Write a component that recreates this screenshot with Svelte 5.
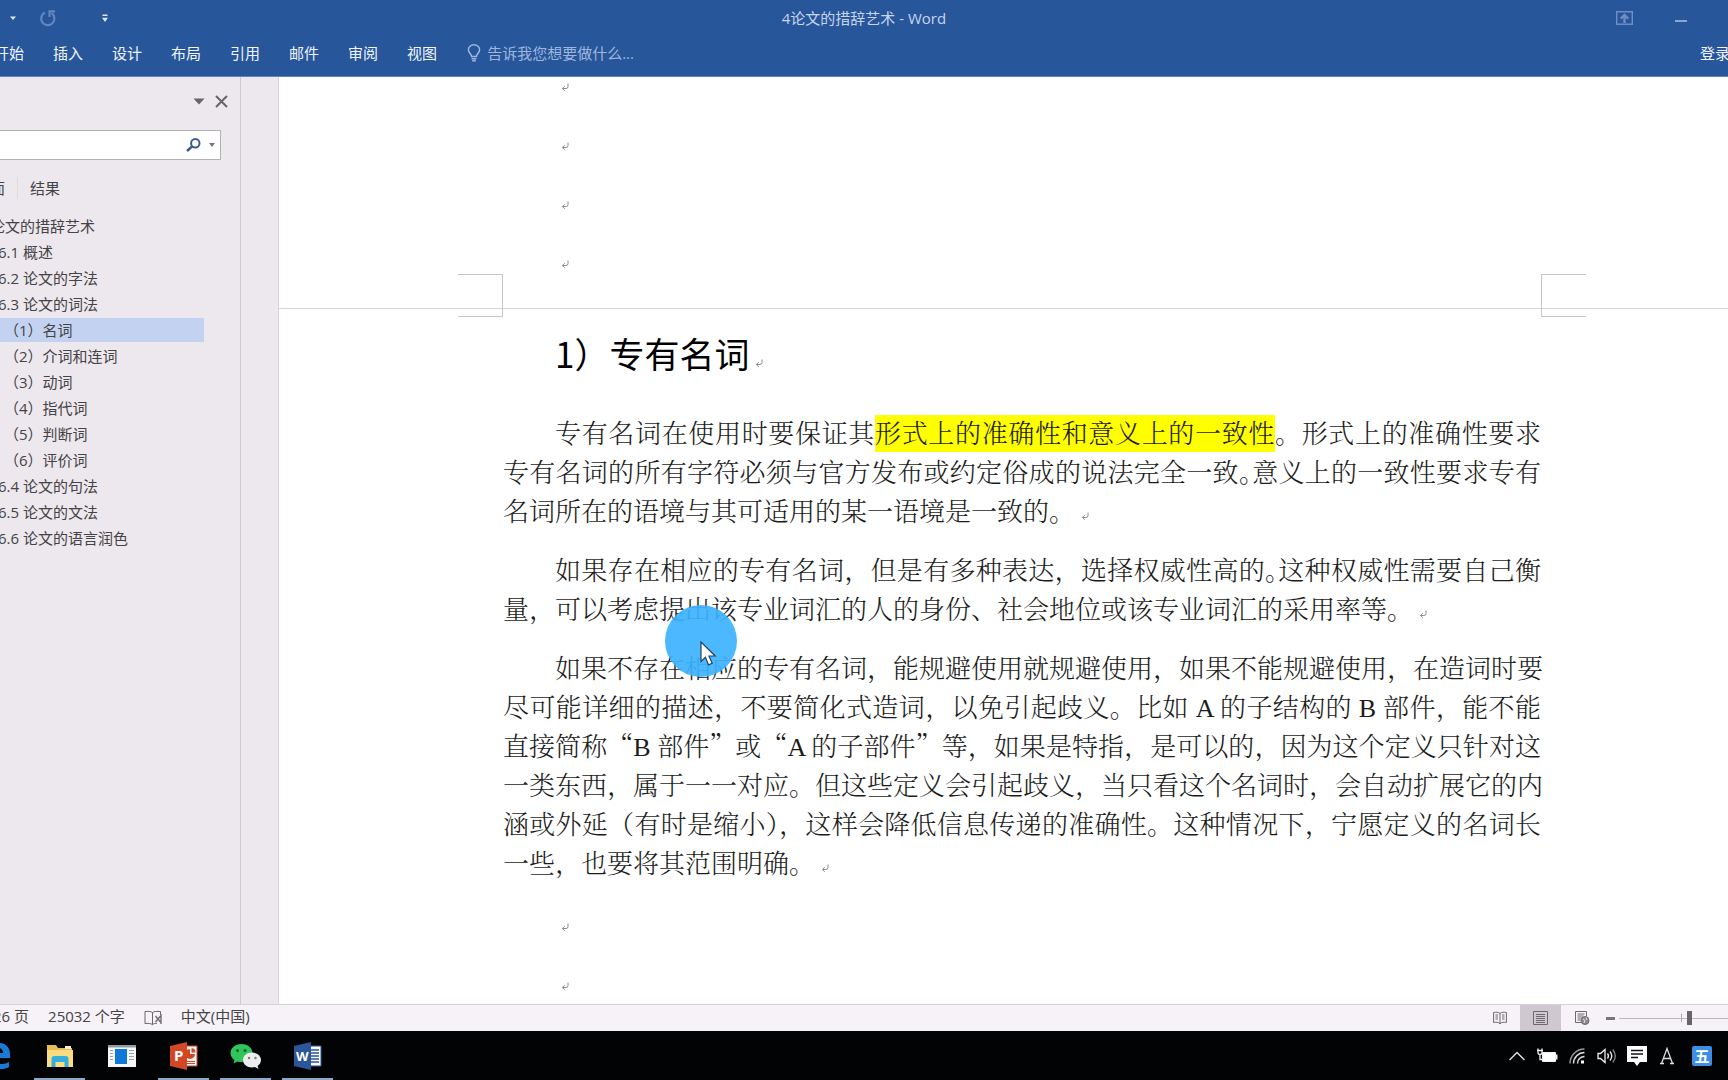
<script>
  const tabs = ['开始', '插入', '设计', '布局', '引用', '邮件', '审阅', '视图']

  const outline = [
    { level: 1, text: '论文的措辞艺术' },
    { level: 2, text: '6.1 概述' },
    { level: 2, text: '6.2 论文的字法' },
    { level: 2, text: '6.3 论文的词法' },
    { level: 3, text: '（1）名词' },
    { level: 3, text: '（2）介词和连词' },
    { level: 3, text: '（3）动词' },
    { level: 3, text: '（4）指代词' },
    { level: 3, text: '（5）判断词' },
    { level: 3, text: '（6）评价词' },
    { level: 2, text: '6.4 论文的句法' },
    { level: 2, text: '6.5 论文的文法' },
    { level: 2, text: '6.6 论文的语言润色' }
  ]

  let selected = $state(4)
  let zoom = $state(57)
  let keyword = $state('')
</script>

{#snippet mark()}
  <svg class="mark" width="8" height="9" viewBox="0 0 8 9" fill="none" stroke="#8c8c8c">
    <path d="M7 0.5V3.5Q7 5.5 5 5.5H1.5M3.8 3.2L1.3 5.5L3.8 7.8" />
  </svg>
{/snippet}

<div class="window">
  <header>
    <div class="title-bar">
      <div class="quick">
        <button class="quick-btn" title="撤消">
          <svg width="8" height="5" viewBox="0 0 8 5"><path d="M1 0.5h6L4 4z" fill="#dfe8f5" /></svg>
        </button>
        <button class="quick-btn redo" title="重复">
          <svg width="18" height="18" viewBox="0 0 18 18" fill="none" stroke="#6485bd" stroke-width="2.2">
            <path d="M6 3.6A6.6 6.6 0 1 0 12.6 4.2M10.5 8V2.4H16" />
          </svg>
        </button>
        <button class="quick-btn" title="自定义快速访问工具栏">
          <svg width="8" height="9" viewBox="0 0 8 9" fill="#dfe8f5"><path d="M1.5 0.5h5v1.4h-5zM1 3.8h6L4 8z" /></svg>
        </button>
      </div>
      <h1>4论文的措辞艺术 - Word</h1>
      <div class="win-btns">
        <button title="功能区显示选项">
          <svg width="17" height="14" viewBox="0 0 17 14" fill="none" stroke="#6f8dc2">
            <path d="M0.7 0.7h15.6v12.6H0.7z" stroke-width="1.4" />
            <path d="M8.5 12V4.5M4.8 7.6L8.5 4l3.7 3.6" stroke-width="2.4" />
          </svg>
        </button>
        <button title="最小化">
          <svg width="12" height="14" viewBox="0 0 12 14"><path d="M0 9h12v2H0z" fill="#8ca6d2" /></svg>
        </button>
      </div>
    </div>
    <div class="ribbon">
      <nav class="tabs">
        {#each tabs as tab}
          <button>{tab}</button>
        {/each}
      </nav>
      <button class="tell-me">
        <svg width="14" height="18" viewBox="0 0 14 18" fill="none" stroke="#9fb6dc" stroke-width="1.5">
          <path d="M4.6 12.5C4.6 9.8 1.4 9 1.4 5.8a5.6 5 0 0 1 11.2 0c0 3.2-3.2 4-3.2 6.7zM4.6 14.7h4.8M5.2 16.8h3.6" />
        </svg>
        告诉我您想要做什么...
      </button>
      <button class="login">登录</button>
    </div>
  </header>

  <div class="workspace">
    <aside>
      <div class="pane-head">
        <button title="任务窗格选项">
          <svg width="12" height="7" viewBox="0 0 12 7"><path d="M0.5 0.5h11L6 6.5z" fill="#666" /></svg>
        </button>
        <button title="关闭">
          <svg width="13" height="13" viewBox="0 0 13 13" stroke="#666" stroke-width="2"><path d="M1 1l11 11M12 1L1 12" /></svg>
        </button>
      </div>
      <div class="search">
        <input type="text" aria-label="搜索文档" bind:value={keyword} />
        <button title="搜索">
          <svg width="15" height="14" viewBox="0 0 15 14" fill="none" stroke="#3c5a92">
            <circle cx="9.3" cy="5.3" r="4.2" stroke-width="2" />
            <path d="M6.2 8.4L1 13" stroke-width="2.6" />
          </svg>
        </button>
        <button title="更多">
          <svg width="6" height="4" viewBox="0 0 6 4"><path d="M0 0h6L3 4z" fill="#777" /></svg>
        </button>
      </div>
      <div class="pane-tabs">
        <button>页面</button>
        <button>结果</button>
      </div>
      <ul>
        {#each outline as item, i}
          <li>
            <button class="node level-{item.level}" class:selected={selected === i} onclick={() => (selected = i)}>
              {item.text}
            </button>
          </li>
        {/each}
      </ul>
    </aside>
    <div class="gutter"></div>

    <main>
      <section class="page-end">
        <p class="blank">{@render mark()}</p>
        <p class="blank">{@render mark()}</p>
        <p class="blank">{@render mark()}</p>
        <p class="blank">{@render mark()}</p>
        <i class="corner left"></i>
        <i class="corner right"></i>
      </section>

      <section class="page">
        <h2>1）专有名词{@render mark()}</h2>

        <p>
          <span class="line first">专有名词在使用时要保证其<mark>形式上的准确性和意义上的一致性</mark>。形式上的准确性要求</span>
          <span class="line">专有名词的所有字符必须与官方发布或约定俗成的说法完全一致<span class="half">。</span>意义上的一致性要求专有</span>
          <span class="line last">名词所在的语境与其可适用的某一语境是一致的。{@render mark()}</span>
        </p>

        <p>
          <span class="line first">如果存在相应的专有名词，但是有多种表达，选择权威性高的<span class="half">。</span>这种权威性需要自己衡</span>
          <span class="line last">量，可以考虑提出该专业词汇的人的身份、社会地位或该专业词汇的采用率等。{@render mark()}</span>
        </p>

        <p>
          <span class="line first">如果不存在相应的专有名词，能规避使用就规避使用，如果不能规避使用，在造词时要</span>
          <span class="line">尽可能详细的描述，不要简化式造词，以免引起歧义。比如 A 的子结构的 B 部件，能不能</span>
          <span class="line">直接简称<span class="wide">“</span>B 部件<span class="wide">”</span>或<span class="wide">“</span>A 的子部件<span class="wide">”</span>等，如果是特指，是可以的，因为这个定义只针对这</span>
          <span class="line">一类东西，属于一一对应。但这些定义会引起歧义，当只看这个名词时，会自动扩展它的内</span>
          <span class="line">涵或外延（有时是缩小<span class="half">）</span>，这样会降低信息传递的准确性。这种情况下，宁愿定义的名词长</span>
          <span class="line last">一些，也要将其范围明确。{@render mark()}</span>
        </p>

        <p class="blank">{@render mark()}</p>
        <p class="blank">{@render mark()}</p>
      </section>

      <div class="pointer">
        <svg width="18" height="26" viewBox="0 0 18 26" fill="#fff" stroke="#26435c" stroke-width="1.2">
          <path d="M1 1v19.5l4.4-4.2 3.2 7.6 3.6-1.6-3.2-7.3h6.2z" />
        </svg>
      </div>
    </main>
  </div>

  <footer class="status">
    <span class="pages">26 页</span>
    <span>25032 个字</span>
    <button title="校对">
      <svg width="18" height="16" viewBox="0 0 18 16" fill="none" stroke="#666">
        <path d="M8.5 2.5C7 1.3 4 1.3 1 1.5v12c3-.2 6-.2 7.5 1.2C9.5 13.5 11 13.4 13 13.4M8.5 2.5v12M8.5 2.5C10 1.3 13 1.3 16.5 1.5v3" />
        <path d="M11.5 6l5 6M16.5 6l-5 6M17 4v10" stroke-width="1.3" />
      </svg>
    </button>
    <span>中文(中国)</span>

    <div class="views">
      <button title="阅读视图">
        <svg width="14" height="14" viewBox="0 0 14 14" fill="none" stroke="#6b6b6b">
          <path d="M7 2.5C5.5 1 3 1 0.6 1.5v10C3 11 5.5 11 7 12.8 8.5 11 11 11 13.4 11.5v-10C11 1 8.5 1 7 2.5zM7 2.5v10.5" />
          <path d="M2.5 4H5M2.5 6H5M2.5 8H5M9 4h2.5M9 6h2.5M9 8h2.5" />
        </svg>
      </button>
      <button class="on" title="页面视图">
        <svg width="15" height="14" viewBox="0 0 15 14" fill="none" stroke="#6b6b6b">
          <path d="M0.5 0.5h14v13H0.5zM3 3.5h9M3 5.5h9M3 7.5h9M3 9.5h9M3 11.5h9" />
        </svg>
      </button>
      <button title="Web 版式视图">
        <svg width="16" height="14" viewBox="0 0 16 14" fill="none" stroke="#6b6b6b">
          <path d="M7 11.5H1.5v-11h11v5M3.5 3h7M3.5 5h6M3.5 7h4M3.5 9h3" />
          <circle cx="11" cy="9.5" r="4" fill="#8a8a8a" />
          <path d="M9 8l2 1.5-1 2.5M12 6.5l1 2.5" stroke="#e8e8e8" />
        </svg>
      </button>
    </div>
    <div class="zoom">
      <button title="缩小">
        <svg width="9" height="3" viewBox="0 0 9 3"><path d="M0 0h9v3H0z" fill="#777" /></svg>
      </button>
      <input type="range" min="0" max="100" aria-label="缩放" bind:value={zoom} />
    </div>
  </footer>

  <div class="taskbar">
    <div class="apps">
      <button title="Edge">
        <svg width="28" height="28" viewBox="0 0 28 28" fill="#1b7ad6">
          <path d="M2 12C4 4 9 1 15 1c7 0 11 5 11 11v4H10c0 4 4 6 8 6 3 0 5-.8 7-2v5c-2 1.5-5 2-8 2C9 27 5 23 5 17c0-4 2-7 5-9-4 .6-6 2-8 4zm8-1h9c0-3-1.5-5-4.5-5S10.4 8 10 11z" />
        </svg>
      </button>
      <button class="running" title="文件资源管理器">
        <svg width="28" height="26" viewBox="0 0 28 26">
          <path d="M1 2h9l2 3h14v19H1z" fill="#e9bd55" />
          <path d="M1 7h26v17H1z" fill="#fbdc83" />
          <path d="M19 3h6v3h-6z" fill="#f7efd2" />
          <path d="M5.5 24v-8q0-3 3-3h11q3 0 3 3v8h-4v-5h-9v5z" fill="#35aede" />
        </svg>
      </button>
      <button title="应用">
        <svg width="28" height="22" viewBox="0 0 28 22">
          <path d="M0 0h28v22H0z" fill="#f4f6f8" />
          <path d="M0 0h28v2.5H0z" fill="#8f9aa5" />
          <path d="M7 4h12v15H7z" fill="#1078d7" />
          <path d="M2 5.5h3M2 8.5h3M2 11.5h3M2 14.5h3M21 5.5h5M21 8.5h5M21 11.5h5M21 14.5h5" stroke="#9aa2aa" />
        </svg>
      </button>
      <button class="running" title="PowerPoint">
        <svg width="28" height="28" viewBox="0 0 28 28">
          <path d="M14 4h13v20H14z" fill="#f8f4f2" stroke="#d24726" />
          <path d="M20 7v5h5a5 5 0 1 1-5-5z" fill="#d24726" />
          <path d="M21.5 6a4.5 4.5 0 0 1 4 4.5h-4z" fill="#d24726" />
          <path d="M17 19.5h8M17 21.5h8" stroke="#d24726" />
          <path d="M0 4L17 0v28L0 24z" fill="#d24726" />
          <text x="4" y="19" font-size="15">P</text>
        </svg>
      </button>
      <button class="running" title="微信">
        <svg width="32" height="28" viewBox="0 0 32 28">
          <path d="M11.5 2C5 2 0.5 6 0.5 11c0 3 1.6 5.4 4 7l-1 3.5 4-2c1.2.4 2.6.5 4 .5 6.5 0 11-4 11-9s-4.5-9-11-9z" fill="#2fc45c" />
          <circle cx="7.5" cy="8.5" r="1.5" fill="#14602c" />
          <circle cx="15" cy="8.5" r="1.5" fill="#14602c" />
          <path d="M22 10.5c-5.2 0-9 3.4-9 7.5s3.8 7.5 9 7.5c1 0 2-.2 3-.5l3.5 2-.9-3c2-1.4 3.4-3.5 3.4-6 0-4.1-3.8-7.5-9-7.5z" fill="#ececec" />
          <circle cx="19" cy="16" r="1.2" fill="#777" />
          <circle cx="25.5" cy="16" r="1.2" fill="#777" />
        </svg>
      </button>
      <button class="running" title="Word">
        <svg width="28" height="28" viewBox="0 0 28 28">
          <path d="M14 4h13v20H14z" fill="#f6f8fb" stroke="#2b579a" />
          <path d="M17 8h8M17 11h8M17 14h8M17 17h8M17 20h8" stroke="#2b579a" stroke-width="1.4" />
          <path d="M0 4L17 0v28L0 24z" fill="#2b579a" />
          <text x="2" y="19" font-size="13">W</text>
        </svg>
      </button>
    </div>

    <div class="tray">
      <button title="显示隐藏的图标">
        <svg width="16" height="10" viewBox="0 0 16 10" fill="none" stroke="#ddd" stroke-width="1.5"><path d="M0.5 9L8 1.5 15.5 9" /></svg>
      </button>
      <button title="电源">
        <svg width="21" height="15" viewBox="0 0 21 15" fill="none" stroke="#eee">
          <path d="M5.5 4.5h13v9h-13z" fill="#fff" />
          <path d="M19.5 6.5v5" stroke-width="2" />
          <path d="M1 0.5v4q0 2 2 2t2-2v-4M0 2.5h6M3 6v5.5h3" stroke-width="1.3" />
        </svg>
      </button>
      <button title="网络">
        <svg width="16" height="16" viewBox="0 0 16 16" fill="none" stroke="#ddd" stroke-width="1.5">
          <path d="M1 15.5C1 7.5 7.5 1 15.5 1" stroke="#999" />
          <path d="M4.5 15.5c0-6 5-11 11-11M8.5 15.5c0-4 3-7 7-7" />
          <path d="M12 12.5h3v3h-3z" fill="#fff" stroke="none" />
        </svg>
      </button>
      <button title="音量">
        <svg width="20" height="16" viewBox="0 0 20 16" fill="none" stroke="#eee" stroke-width="1.3">
          <path d="M1 5.5h2.5L8 1.5v13L3.5 10.5H1zM10.5 5.5q2 2.5 0 5M13 3.5q3.5 4.5 0 9" />
          <path d="M15.8 1.5q5 6.5 0 13" stroke="#888" />
        </svg>
      </button>
      <button title="操作中心">
        <svg width="20" height="20" viewBox="0 0 20 20">
          <path d="M0 0h20v16h-7l-3 4-3-4H0z" fill="#fff" />
          <path d="M4 4.5h12M4 8h12M4 11.5h7" stroke="#111" stroke-width="1.4" />
        </svg>
      </button>
      <button title="输入模式">
        <svg width="14" height="18" viewBox="0 0 14 18" fill="none" stroke="#ddd" stroke-width="1.3">
          <path d="M1.5 16.5L7 1.5l5.5 15M3.5 11.5h7M0 16.5h4M10 16.5h4" />
        </svg>
      </button>
      <button class="ime" title="五笔输入法">五</button>
    </div>
  </div>
</div>

<style>
  :global(body) {
    margin: 0;
  }

  .window {
    display: grid;
    grid-template-columns: minmax(0, 1fr);
    grid-template-rows: auto 1fr auto auto;
    height: 100vh;
    overflow: hidden;
    background: #fff;
    font-family: 'Open Sans', 'Noto Sans CJK SC', sans-serif;
    font-size: 15px;
    line-height: 20px;
    color: #444;
  }

  button {
    display: flex;
    align-items: center;
    justify-content: center;
    flex: none;
    padding: 0;
    border: none;
    background: none;
    color: inherit;
    font: inherit;
    white-space: nowrap;
    cursor: pointer;
  }

  p,
  h1,
  h2,
  ul {
    margin: 0;
    padding: 0;
  }

  header {
    background: #28569b;
    border-bottom: 1px solid #5f84bd;
    color: #f0f5fc;
  }

  .title-bar {
    display: grid;
    grid-template-columns: 1fr auto 1fr;
    align-items: center;
    height: 36px;
  }

  .quick {
    display: flex;
    align-items: center;
    padding-left: 9px;
  }

  .redo {
    margin: 0 44px 0 22px;
  }

  h1 {
    font-size: 15px;
    font-weight: 400;
    color: #c6d5ec;
  }

  .win-btns {
    display: flex;
    justify-content: flex-end;
    gap: 42px;
    padding-right: 41px;
  }

  .ribbon {
    display: flex;
    align-items: center;
    height: 34px;
    padding-bottom: 6px;
  }

  .tabs {
    display: flex;
    gap: 29px;
    margin-left: -6px;
  }

  .tell-me {
    gap: 6px;
    margin-left: 30px;
    color: #9fb6dc;
  }

  .login {
    margin: 0 -2px 0 auto;
  }

  .workspace {
    display: flex;
    min-height: 0;
    background: #ede7ee;
  }

  aside {
    flex: none;
    width: 240px;
    overflow: hidden;
    border-right: 1px solid #cfcad1;
  }

  .pane-head {
    display: flex;
    justify-content: flex-end;
    gap: 10px;
    height: 48px;
    padding: 0 12px 5px 0;
  }

  .search {
    display: flex;
    gap: 8px;
    height: 28px;
    margin-right: 19px;
    padding-right: 5px;
    border: 1px solid #b5b2b6;
    border-left: none;
    background: #fff;
  }

  .search input {
    flex: 1;
    min-width: 0;
    padding: 0 8px;
    border: none;
    outline: none;
    font: inherit;
  }

  .pane-tabs {
    display: flex;
    align-items: center;
    height: 22px;
    margin: 17px 0 15px -25px;
  }

  .pane-tabs button + button {
    height: 22px;
    margin-left: 12px;
    padding-left: 12px;
    border-left: 1px solid #dfd9e0;
  }

  ul {
    list-style: none;
  }

  .node {
    justify-content: flex-start;
    width: 204px;
    height: 24px;
    margin-bottom: 2px;
  }

  .level-1 {
    text-indent: -10px;
  }

  .level-2 {
    text-indent: -2px;
  }

  .level-3 {
    text-indent: 4px;
  }

  .selected {
    background: #c4d2f2;
  }

  .gutter {
    flex: none;
    width: 37px;
    border-right: 1px solid #d9d4db;
  }

  main {
    position: relative;
    flex: 1;
    min-width: 0;
    overflow: hidden;
    background: #fff;
    color: #1c1c1c;
    font-family: 'Liberation Serif', SimSun, 'Noto Serif CJK SC', 'Noto Sans CJK SC', serif;
    font-size: 26px;
    font-weight: 300;
    line-height: 39px;
  }

  .page-end,
  .page {
    padding: 0 187px 0 224px;
  }

  .page-end {
    position: relative;
    display: flex;
    flex-direction: column;
    justify-content: flex-end;
    gap: 20px;
    height: 203px;
    padding-bottom: 28px;
    border-bottom: 1px solid #d4d4d4;
  }

  .blank {
    flex: none;
    height: 39px;
    padding-left: 52px;
  }

  .mark {
    margin-left: 6px;
  }

  .corner {
    position: absolute;
    bottom: -9px;
    width: 44px;
    height: 41px;
    border: 1px solid #c6c6c6;
  }

  .corner.left {
    left: 179px;
    border-left: none;
  }

  .corner.right {
    right: 142px;
    border-right: none;
  }

  .page {
    padding-top: 14px;
  }

  h2 {
    margin-bottom: 32px;
    padding-left: 52px;
    font-family: 'Noto Sans CJK SC', sans-serif;
    font-size: 35px;
    font-weight: 400;
    line-height: 60px;
    color: #000;
  }

  .page p {
    margin-bottom: 20px;
  }

  .line {
    display: block;
    text-align: justify;
    text-align-last: justify;
    white-space: nowrap;
  }

  .line.first {
    padding-left: 52px;
  }

  .line.last {
    text-align-last: left;
  }

  .half {
    font-feature-settings: 'halt';
  }

  /* full-width quotation marks */
  .wide {
    font-family: SimSun, 'Noto Serif CJK SC', 'Noto Sans CJK SC', serif;
    line-height: 1;
  }

  mark {
    padding: 5px 0 3px;
    background: #ff0;
    color: inherit;
  }

  .pointer {
    position: absolute;
    top: 528px;
    left: 386px;
    width: 72px;
    height: 72px;
    border-radius: 50%;
    background: rgba(60, 178, 255, 0.92);
  }

  .pointer svg {
    position: absolute;
    top: 36px;
    left: 35px;
  }

  .status {
    display: flex;
    align-items: center;
    gap: 19px;
    height: 26px;
    overflow: hidden;
    border-top: 1px solid #d8d2d9;
    background: #f6f2f7;
  }

  .status span {
    padding-bottom: 4px;
  }

  .pages {
    margin-left: -7px;
  }

  .views {
    display: flex;
    align-self: stretch;
    margin-left: auto;
  }

  .views button {
    width: 41px;
  }

  .views .on {
    background: #cfc8d1;
  }

  .zoom {
    display: flex;
    align-items: center;
    gap: 4px;
    margin: 0 -15px;
  }

  .zoom input {
    appearance: none;
    width: 124px;
    height: 14px;
    margin: 0;
    background:
      linear-gradient(#aaa, #aaa) center / 1px 8px no-repeat,
      linear-gradient(#bbb, #bbb) center / 100% 1px no-repeat;
  }

  .zoom input::-webkit-slider-thumb {
    appearance: none;
    width: 5px;
    height: 14px;
    background: #666;
  }

  .taskbar {
    display: flex;
    justify-content: space-between;
    height: 49px;
    overflow: hidden;
    background: #020305;
  }

  .apps {
    display: flex;
    gap: 11px;
    margin-left: -28px;
  }

  .apps button {
    width: 51px;
    padding-top: 2px;
    border-bottom: 2px solid transparent;
  }

  .apps .running {
    border-bottom-color: #8ea9cc;
  }

  .apps text {
    fill: #fff;
    font-family: 'Open Sans', sans-serif;
    font-weight: 700;
  }

  .tray {
    display: flex;
    align-items: center;
    padding-right: 16px;
  }

  .tray button {
    width: 30px;
    height: 40px;
  }

  .tray .ime {
    width: 20px;
    height: 20px;
    margin-left: 10px;
    border-radius: 2px;
    background: #3d8fe6;
    color: #fff;
    font-weight: 700;
  }
</style>
